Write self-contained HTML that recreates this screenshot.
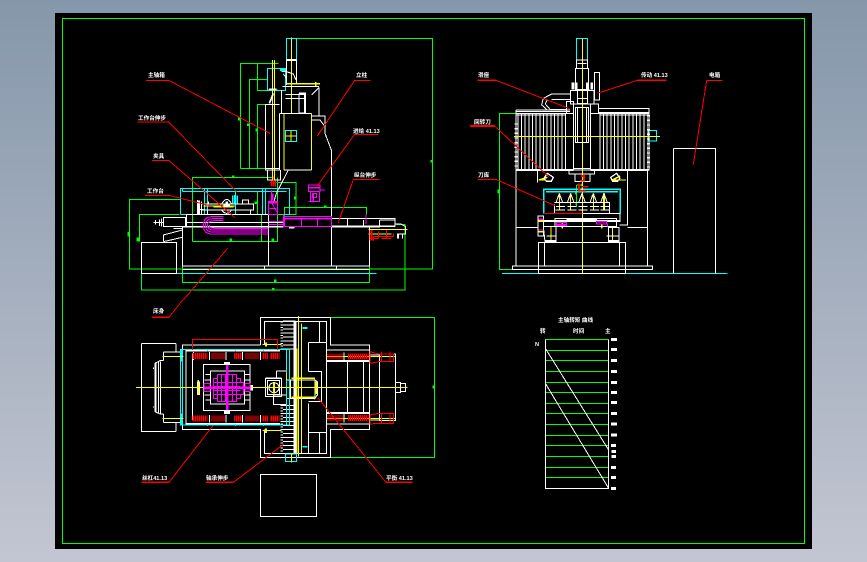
<!DOCTYPE html>
<html><head><meta charset="utf-8"><style>
html,body{margin:0;padding:0;width:867px;height:562px;overflow:hidden;background:linear-gradient(#8597aa,#c3c6d2)}
svg{position:absolute;left:0;top:0}
.g{stroke:#0f0}.c{stroke:#0ff}.w{stroke:#fff}.r{stroke:#f00}.y{stroke:#ff0}.m{stroke:#f0f}
g.z *{fill:none;stroke-width:3}
text{font-family:"Liberation Sans","Noto Sans CJK SC",sans-serif;font-size:5.6px;font-weight:700;fill:#fff}
</style></head><body>
<svg width="867" height="562" viewBox="0 0 867 562" shape-rendering="crispEdges">
<rect x="55" y="13" width="757" height="536" fill="#000"/>
<rect x="62.5" y="18.5" width="742" height="525" fill="none" stroke="#0f0"/>

<!-- view 1 -->
<g class="z" transform="translate(120,30) scale(.33333)">
<path class="g" d="M499 25H937V717H28V508H180M361 415V100H476M361 415H440M388 415V148H441M412 100V181H441M412 415V223H440M217 634V442H465M217 634H472V442M472 457H528V553H412V485M424 553V634M58 634V553H178M64 637V780H855V583H830M493 553V532H739V553M187 590V757H748V590"/>
<path class="g" style="stroke-width:8" d="M358 262v10M385 280v8M410 296v8M935 390v8M336 440h8M526 500v8M408 514v8M612 530h8M26 606v14M54 622v12M328 630h8M454 630h8M462 752h8M456 778h8"/>
<path class="c" d="M499 25H529V90H499ZM442 115H497V181H442ZM497 301H530V335H497ZM181 553V475H508V553H493M181 553H200M187 485H500M187 475V485M253 475V553M263 475V553M347 485V553M427 475V553M437 475V553M170 730H770"/>
<path class="c" style="stroke-width:5" d="M338 497V522M345 495V522M352 497V522M442 181H472M480 120H497V160"/>
<path class="y" d="M457 90V450M463 90V450M514 22V250M745 598H862M745 612H815M492 250V420M575 250V420M497 318H530M513 301V335M250 528H345"/>
<path class="y" style="stroke-width:5" d="M500 161H600M280 530H340M587 156V170"/>
<path class="w" d="M499 90V165M529 90V160M499 90H529M485 125H500L520 132 528 150M490 132L500 145V165M485 180V250M487 170H597M597 172V258M497 193H555V250M537 190V250M497 205H555M478 250H575M478 250V420H436V223H478M492 420H575M575 258H615V310L634 360V708M575 270H600L615 290M575 195L597 172M436 415H480M442 420V450H482V420M505 420L470 488 460 520M187 590V708H748V590M187 718H748M445 553V708M634 590V708M433 708V718M649 708V718M200 553H445M200 577H490M200 553V590M130 562H197V590H130ZM118 568V588M106 570V584M124 566V590M100 577H130M140 590H187M160 595H187M130 635V615L187 600M187 622L130 635M64 637H170V730H64ZM64 730H170M635 565H825V588H635M683 565V590M730 570V590M778 570V590H825M778 570H825M825 582H842L857 590V612H832V625M835 612V625M848 612V625"/>
<path class="w" style="stroke-width:5" d="M187 590H490M635 590H780M447 178H470M460 190L448 220M507 593H523M537 190H555V250H537M499 90H529"/>
<path class="w" d="M233 510V553M245 515V553M233 538H250M245 522H400V540H250M265 515V522M368 522V510H385V522M305 522Q320 495 335 522M305 540Q320 560 335 540M312 530h16M392 540V553M245 540H262V553"/>
<path class="w" style="stroke-width:7" d="M236 512V552M320 515V528M310 525h20"/>
<path class="m" d="M490 560H635V590H490ZM544 565V590M592 565V590M445 575H490M445 583H490M310 560H275Q250 562 250 585 250 612 275 612H445M310 566H278Q256 568 256 585 256 606 278 606H445M310 572H282Q262 574 262 585 262 600 282 600H445M268 585Q268 595 285 595H445M445 515H472V553H445ZM455 480V515M453 515L470 545M448 535H470M738 553V582M565 465H600V485H565ZM572 485V515H598V485M565 515H598M600 480H615M577 490H590V502H577Z"/>
<path class="m" style="stroke-width:5" d="M490 566H635M492 555V590M565 473H600M580 490V515M445 518H472M458 490V512"/>
<path class="r" d="M78 151H146L450 310M52 276H146L350 485M96 391H146L345 563M75 496H146L270 527M190 810L323 655M704 151H752M704 151L592 318M704 313H776M704 313L590 470M700 448H778M700 448L655 578M750 600V630H760V620H820V610M775 605V625M800 600V625M750 625H775M785 625H815M460 440V470M452 458H472"/>
<path class="r" style="stroke-width:5" d="M455 452V470M466 452V470M755 600V628"/>
</g>

<!-- view 2 -->
<g class="z" transform="translate(120,300) scale(.33333)">
<path class="g" d="M632 52H943V472H632"/>
<path class="g" style="stroke-width:6" d="M941 256V266"/>
<path class="w" d="M421 135V52H632V135H748V388H632V472H421V388H187V135H421M433 135V64H620V460H433V388M198 148H480M198 375H480M198 148V375M218 160V360M250 193H390V332H250ZM271 213H374V312H271ZM256 223H271M256 300H271M374 223H388M374 300H388M254 240H271M254 285H271M374 240H388M374 285H388M64 130H168M64 130V395H168M168 130V156M168 395V368M130 156H187M130 368H187M130 156V182M130 368V342M130 182H120L105 190V335L120 342H130M115 186V340M122 184V340M108 186V338M436 235H485V290H436ZM442 241H479V284H442ZM462 263m-15 0a15 15 0 1 0 30 0a15 15 0 1 0 -30 0M460 285H500V313H460ZM470 213H500M470 213V235M500 240H585V295H500M585 240V295L592 285V245ZM512 240V295M565 128H620M565 128V215M565 215H605V305H565M565 397H620M565 310V460M598 64V128M565 397V460M598 397V460M605 220V240M620 150H748M620 185H748M620 338H748M620 372H748M682 185V338M730 185V338M748 155V380M748 165H778M748 360H778M778 162H826V362H778ZM826 247H842V277H826ZM842 250H857V275H842ZM100 203V207M100 320V323M421 523H590V649H421Z"/>
<path class="w" style="stroke-width:5" d="M198 152H480M198 372H480M620 183H748M620 340H748M527 65V462M523 65V462M436 235H485"/>
<path class="w" style="stroke-width:36;stroke-dasharray:3 9" d="M507 62V150M507 315V462"/>
<path class="w" style="stroke-width:8;stroke-dasharray:3 5" d="M485 65V150M485 315V462"/>
<path class="w" d="M525 62V462"/>
<path class="w" d="M221 156V180M268 156V180M318 156V180M368 156V180M422 156V180M268 345V368M318 345V368M368 345V368M422 345V368M672 158V185M672 340V368"/>
<path class="w" style="stroke-width:9" d="M236 245V285M320 188H320M312 190h18M312 338h18"/>
<path class="w" style="stroke-width:9" d="M395 255V272M185 170V175"/>
<path class="c" d="M181 148H508V375H181ZM187 148V375M500 148V375M263 148V154M347 148V154M263 372V378M347 372V378M430 148V154M430 372V378M496 462H530V485H496Z"/>
<path class="c" style="stroke-width:5" d="M548 84H563M548 440H563M184 150V185M184 340V375"/>
<path class="y" d="M48 262H863M128 170H190M128 355H190M535 48V470M545 70V460M514 462V488M427 133H485M427 392H485M620 355H825M620 170H825M500 220V240"/>
<path class="y" style="stroke-width:5" d="M514 235H585M514 292H585M462 248V280M588 245V282M438 127V140M438 386V399M530 145V460M235 240V285"/>
<path class="r" d="M217 150V118H472V150M64 547H147L278 378M258 547H340L492 432M798 547H878M798 547L594 294M96 52H147L188 0M750 155L775 162H820V185H775L750 190ZM785 155V185M810 155V185M750 345L775 340H820V370H775L750 372ZM785 340V370M810 340V370"/>
<path class="r" style="stroke-width:18;stroke-dasharray:4 2" d="M218 168H262M274 168H316M342 168H366M376 168H418M428 168H446M452 168H478M622 170H670M684 170H745M218 356H262M274 356H316M342 356H366M376 356H418M428 356H446M452 356H478M622 354H670M684 354H745"/>
<path class="r" style="stroke-width:5" d="M64 547H147M258 547H340M798 547H878M96 52H147"/>
<path class="m" d="M292 223H350V235H362V248H370V283H362V295H350V305H292V295H280V235H292ZM280 247H362M280 259H362M280 271H362M280 283H362M304 223V305M316 223V305M338 223V305M350 235V295M292 235V295M252 250H270V275H252ZM375 250H390V275H375Z"/>
<path class="m" style="stroke-width:7" d="M322 195V330M250 263H390"/>
</g>

<!-- view 3 -->
<g class="z" transform="translate(460,30) scale(.33333)">
<path class="g" d="M168 250H118V718H158M350 465H368M350 465V530"/>
<path class="g" style="stroke-width:6" d="M115 478V490M345 490h6M298 495v6M332 495v6M366 495v6M398 495v6M432 495v6M348 520v4"/>
<path class="c" d="M349 25H383V90H349ZM566 301H590V333H566ZM126 730H803"/>
<path class="c" style="stroke-width:4" d="M251 550V478H481V550M258 485H474"/>
<path class="y" d="M367 25V730M162 319H600M273 590V635M458 590V635M235 450H258M460 450H498M298 490V540M332 490V540M400 490V540"/>
<path class="y" style="stroke-width:5" d="M238 450L262 442M458 450L480 438M432 490V540M307 575V595M425 580V595M236 573h14M236 605h14M367 460V480"/>
<path class="w" d="M349 90H383V115H349ZM346 115H386V180H346ZM353 100H380M331 182H402V222H331ZM352 182V220H382V182M352 205H382M403 127H419V210H403ZM275 192H331M275 208H331M275 192L250 205 245 225 262 240H319M262 208L256 222 270 238H319M319 215H340V250H319ZM392 222H415V250H392ZM340 222H392V420H340ZM346 232H386V338H346ZM352 232V338H380V232M340 415H392M168 240H330M415 235H567V250M168 245H330M415 248H567M168 240V420H340M567 250V420H392M327 420V432H404V420M345 432V455H390V432M168 420V708M563 420V708M157 708H578V718H157ZM235 637H497V730H235ZM253 637V708M478 637V708M168 592H235M503 592H563M480 550V575H250V595M283 550V525H285M283 518H448V550M283 550H480M285 565H470V590H285ZM322 565V575H410V565M502 420V585H478M233 420V458M250 590H288V635H255ZM445 592H477V635H445ZM440 618H475M260 618H288M234 558H250V618H234ZM640 355H766V730M640 355V730M298 490L288 518M298 490L308 518M332 490L322 518M332 490L342 518M366 490L356 518M366 490L376 518M400 490L390 518M400 490L410 518M432 490L422 518M432 490L442 518M288 530H315M322 530H349M356 530H383M390 530H417M422 530H449M286 540H315M322 540H349M356 540H383M390 540H417M422 540H449M320 570H410"/>
<path class="w" style="stroke-width:5" d="M170 420H340M392 420H565M320 570H410M250 573H480M253 632h33M445 632h30M345 180H388"/>
<path class="w" style="stroke-width:4" d="M252 445l10-15 18 12-6 12-14 0ZM480 445l-10-15-18 12 6 12 14 0Z"/>
<path class="w" style="stroke-width:8;stroke-dasharray:4 10" d="M168 280V420M566 255V420"/>
<path class="w" style="stroke-width:170;stroke-dasharray:3 8" d="M172 335H318M418 335H562"/>
<path class="w" style="stroke-width:8" d="M338 158V178M348 158V178M395 158V178M382 158V178"/>
<path class="w" d="M168 240H330M168 250H318M415 235H567M415 250H567M170 255H318M418 255H565"/>
<path class="y" d="M162 319H600"/>
<path class="r" d="M52 151H108L329 236M532 151H620M532 151L412 190M30 288H104L266 440M52 448H108L285 527M740 151H788M740 151L700 403M255 550H367"/>
<path class="r" style="stroke-width:5" d="M357 460V482H378M365 470H385M360 452H375M363 438H372V452M52 151H108M532 151H620M30 288H104"/>
<path class="m" d="M290 578H320V586H290ZM410 574H440V582H410ZM420 582H442V590"/>
<path class="m" style="stroke-width:4" d="M290 584H318M412 576H440M236 568h14M236 600h14"/>
</g>

<!-- chart -->
<g class="z" transform="translate(520,310) scale(.33333)">
<path class="g" d="M76 88H266M76 121H266M76 151H266M76 184H266M76 217H266M76 247H266M76 280H266M76 310H266M76 343H266M76 376H266M76 406H266M76 439H266M76 472H266M76 502H266M76 535H266"/>
<path class="w" d="M76 88V536H266V88M76 115L266 420M76 220L266 535"/>
<path class="w" style="stroke-width:9" d="M273 88H291M273 118H291M273 151H291M273 184H291M273 217H291M273 247H291M273 278H291M273 310H291M273 342H291M273 375H291M273 406H288M275 424H288M275 439H288M273 472H288M273 502H288M273 535H288"/>
</g>

<!-- labels -->
<text x="148" y="77">主轴箱</text>
<text x="138" y="120">工作台伸步</text>
<text x="153" y="158">夹具</text>
<text x="147" y="193">工作台</text>
<text x="356" y="77">立柱</text>
<text x="353" y="133">进给 41.13</text>
<text x="354" y="177">纵台伸步</text>
<text x="153" y="313">床身</text>
<text x="142" y="480">丝杠41.13</text>
<text x="206" y="480">轴承伸步</text>
<text x="386" y="480">平衡 41.13</text>
<text x="478" y="77">滑座</text>
<text x="641" y="77">传动 41.13</text>
<text x="709" y="77">电箱</text>
<text x="474" y="124">回转刀</text>
<text x="478" y="177">刀库</text>
<text x="558" y="322">主轴转矩 曲线</text>
<text x="540" y="333">转</text>
<text x="573" y="333">时间</text>
<text x="605" y="333">主</text>
<text x="535" y="346">N</text>
</svg>
</body></html>
